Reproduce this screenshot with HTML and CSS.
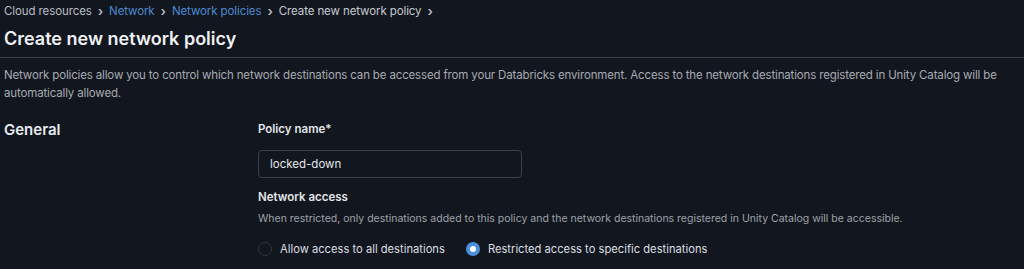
FILE: index.html
```html
<!DOCTYPE html>
<html lang="en">
<head>
    <meta charset="UTF-8">
    <title>Create new network policy</title>
    <link rel="stylesheet" href="styles.css">
</head>
<body>
    <!-- breadcrumbs -->
    <nav class="breadcrumbs">
        <span class="crumb">Cloud resources</span><span class="sep">&#x203A;</span>
        <a class="crumb link" href="#">Network</a><span class="sep">&#x203A;</span>
        <a class="crumb link" href="#">Network policies</a><span class="sep">&#x203A;</span>
        <span class="crumb current">Create new network policy</span><span class="sep">&#x203A;</span>
    </nav>

    <h1 class="page-title">Create new network policy</h1>
    <hr class="divider">

    <p class="intro">Network policies allow you to control which network destinations can be accessed from your Databricks environment. Access to the network destinations registered in Unity Catalog will be automatically allowed.</p>

    <section class="section">
        <h2 class="section-title">General</h2>
        <div class="form">
            <label class="field-label" for="policy-name">Policy name*</label>
            <input id="policy-name" class="text-input" type="text" value="locked-down">

            <div class="field-label">Network access</div>
            <p class="hint">When restricted, only destinations added to this policy and the network destinations registered in Unity Catalog will be accessible.</p>
            <div class="radios">
                <label class="radio"><span class="dot"></span>Allow access to all destinations</label>
                <label class="radio"><span class="dot checked"></span>Restricted access to specific destinations</label>
            </div>
        </div>
    </section>
</body>
</html>
```

FILE: styles.css
```css
body {
    margin: 0;
    padding: 0 4px;
    background-color: #12161e;
    color: #e4e6ea;
    font-family: Inter, "Liberation Sans", sans-serif;
}

.breadcrumbs {
    display: flex;
    align-items: center;
    height: 22px;
    font-size: 11.5px;
    letter-spacing: -0.1px;
    color: #b9bdc4;
}

.crumb {
    text-decoration: none;
}

.crumb.link {
    color: #4b8ad0;
}

.crumb.current {
    color: #c6c9ce;
}

.sep {
    margin: 0 6px 0 6px;
    font-size: 13px;
    font-weight: 600;
    color: #b9bdc4;
}

.page-title {
    margin: 5px 0 0;
    font-size: 18px;
    font-weight: 600;
    line-height: 24px;
    color: #eef0f3;
}

.divider {
    margin: 6px -4px 0;
    border: none;
    border-top: 1px solid #3a3f48;
}

.intro {
    margin: 8px 0 0;
    font-size: 11.5px;
    letter-spacing: -0.15px;
    line-height: 18px;
    color: #a7abb2;
    padding-right: 20px;
}

.section {
    display: grid;
    grid-template-columns: 254px 1fr;
    margin-top: 17px;
}

.section-title {
    margin: 0;
    font-size: 15px;
    font-weight: 600;
    line-height: 22px;
    color: #e8eaee;
}

.form {
    display: flex;
    flex-direction: column;
    align-items: flex-start;
}

.field-label {
    font-size: 11.5px;
    font-weight: 600;
    line-height: 18px;
    color: #e4e6ea;
    margin-top: 1px;
}

.text-input {
    box-sizing: border-box;
    width: 264px;
    height: 28px;
    margin: 12px 0 9px;
    padding: 0 11px;
    background: #12161e;
    border: 1px solid #3b4049;
    border-radius: 4px;
    color: #e4e6ea;
    font-family: inherit;
    font-size: 11.5px;
}

.hint {
    margin: 5px 0 0;
    font-size: 10.5px;
    line-height: 16px;
    color: #9ea2a9;
}

.radios {
    display: flex;
    gap: 21px;
    margin-top: 15px;
}

.radio {
    display: flex;
    align-items: center;
    gap: 8px;
    font-size: 11.2px;
    color: #dcdfe3;
}

.dot {
    box-sizing: border-box;
    width: 14px;
    height: 14px;
    border-radius: 50%;
    border: 1px solid #2f343c;
}

.dot.checked {
    border: 4px solid #4a90dd;
    background: #ffffff;
}
```
